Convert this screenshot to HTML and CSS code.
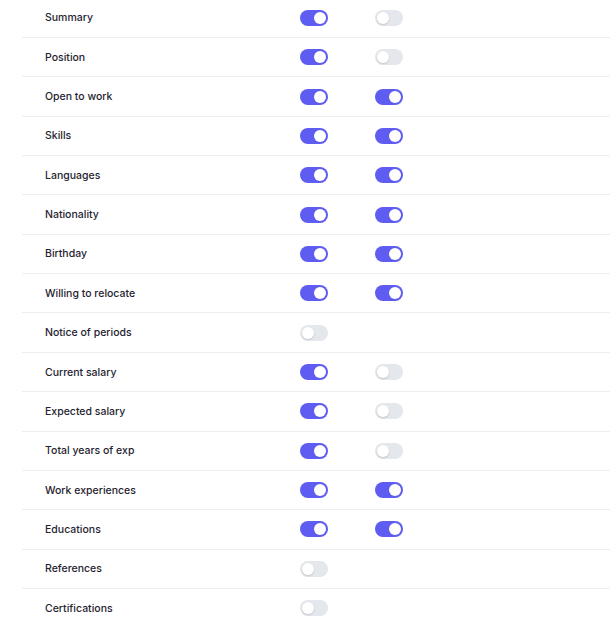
FILE: index.html
```html
<!DOCTYPE html>
<html lang="en">
<head>
    <meta charset="UTF-8">
    <meta name="viewport" content="width=device-width, initial-scale=1.0">
    <title>Profile visibility</title>
    <link rel="stylesheet" href="styles.css">
</head>
<body>
    <div class="field-list">
        <div class="field-row"><span class="field-name">Summary</span><span class="toggle on"></span><span class="toggle"></span></div>
        <div class="field-row"><span class="field-name">Position</span><span class="toggle on"></span><span class="toggle"></span></div>
        <div class="field-row"><span class="field-name">Open to work</span><span class="toggle on"></span><span class="toggle on"></span></div>
        <div class="field-row"><span class="field-name">Skills</span><span class="toggle on"></span><span class="toggle on"></span></div>
        <div class="field-row"><span class="field-name">Languages</span><span class="toggle on"></span><span class="toggle on"></span></div>
        <div class="field-row"><span class="field-name">Nationality</span><span class="toggle on"></span><span class="toggle on"></span></div>
        <div class="field-row"><span class="field-name">Birthday</span><span class="toggle on"></span><span class="toggle on"></span></div>
        <div class="field-row"><span class="field-name">Willing to relocate</span><span class="toggle on"></span><span class="toggle on"></span></div>
        <div class="field-row"><span class="field-name">Notice of periods</span><span class="toggle"></span></div>
        <div class="field-row"><span class="field-name">Current salary</span><span class="toggle on"></span><span class="toggle"></span></div>
        <div class="field-row"><span class="field-name">Expected salary</span><span class="toggle on"></span><span class="toggle"></span></div>
        <div class="field-row"><span class="field-name">Total years of exp</span><span class="toggle on"></span><span class="toggle"></span></div>
        <div class="field-row"><span class="field-name">Work experiences</span><span class="toggle on"></span><span class="toggle on"></span></div>
        <div class="field-row"><span class="field-name">Educations</span><span class="toggle on"></span><span class="toggle on"></span></div>
        <div class="field-row"><span class="field-name">References</span><span class="toggle"></span></div>
        <div class="field-row"><span class="field-name">Certifications</span><span class="toggle"></span></div>
    </div>
</body>
</html>
```

FILE: styles.css
```css
body {
    margin: 0;
    padding: 0;
    background-color: #fff;
    font-family: Inter, "Liberation Sans", sans-serif;
    color: #1f2430;
    overflow: hidden;
}

.field-list {
    margin: -1.4px 0 0 22px;
}

.field-row {
    display: grid;
    grid-template-columns: 278px 75px 1fr;
    align-items: center;
    height: 39.36px;
    box-sizing: border-box;
    border-bottom: 1px solid #eceef2;
}

.field-name {
    padding-left: 23px;
    font-size: 10.5px;
    font-weight: 500;
}

.toggle {
    position: relative;
    width: 28px;
    height: 16px;
    border-radius: 8px;
    background-color: #e4e7ec;
}

.toggle::after {
    content: "";
    position: absolute;
    top: 2px;
    left: 2px;
    width: 12px;
    height: 12px;
    border-radius: 50%;
    background-color: #fff;
    box-shadow: 0 1px 2px rgba(0, 0, 0, 0.15);
}

.toggle.on {
    background-color: #5f5cf1;
}

.toggle.on::after {
    left: 14px;
    box-shadow: none;
}
```
